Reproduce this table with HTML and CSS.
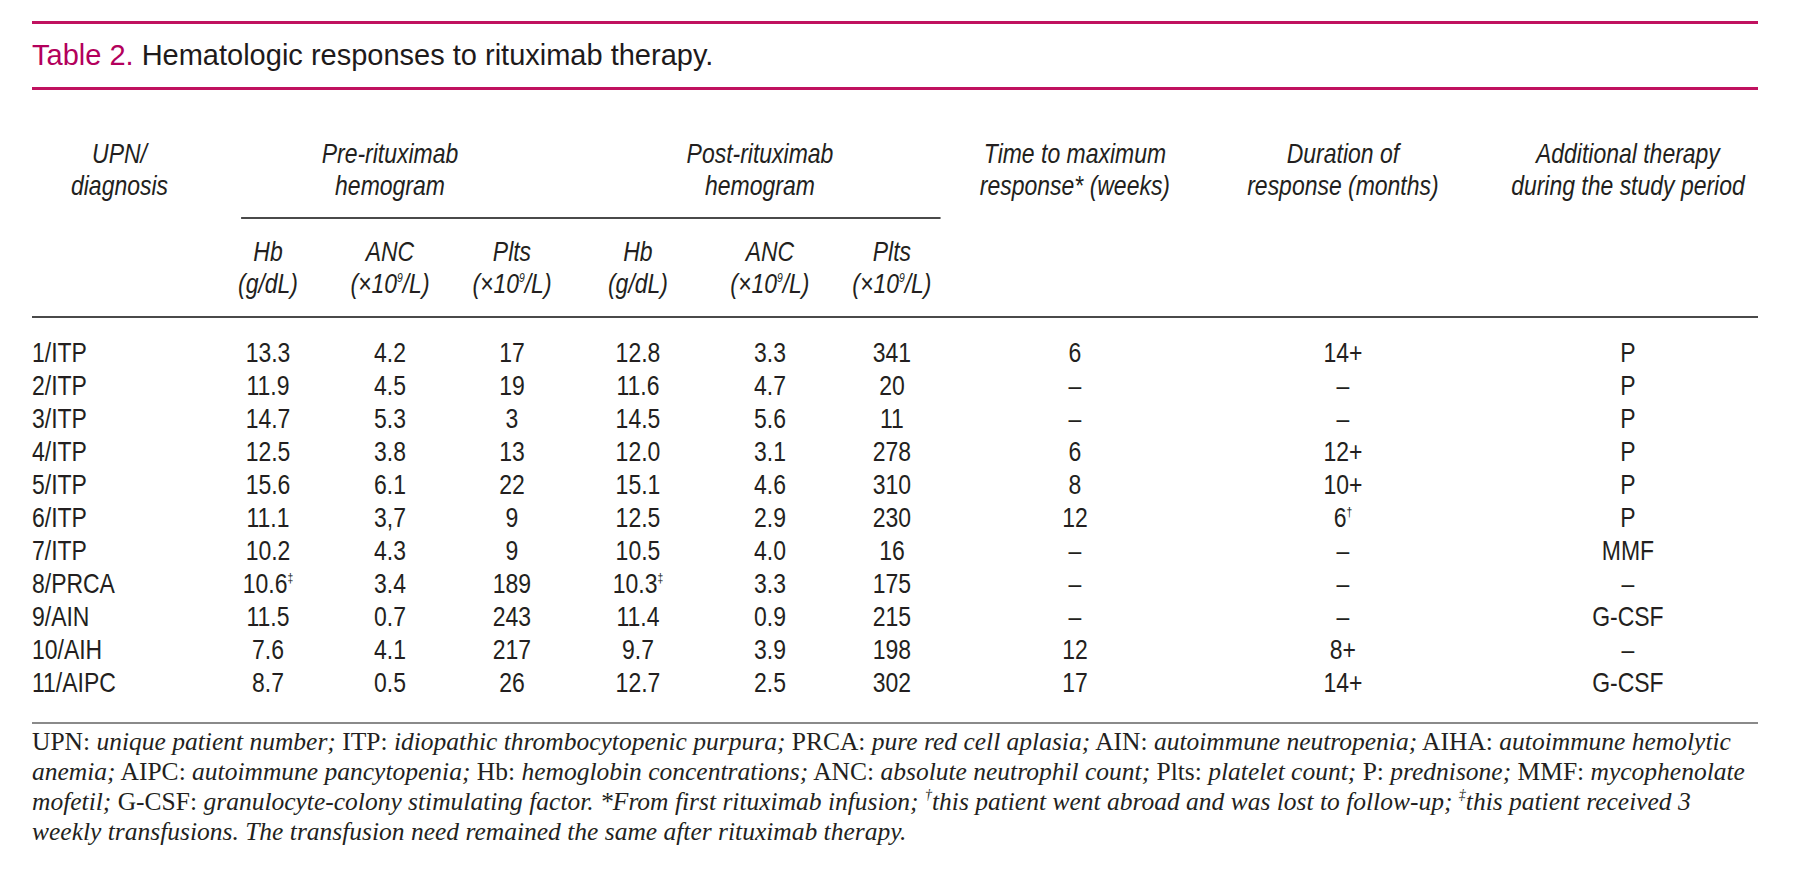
FILE: index.html
```html
<!DOCTYPE html>
<html lang="en">
<head>
<meta charset="utf-8">
<title>Table 2. Hematologic responses to rituximab therapy.</title>
<link rel="stylesheet" href="styles.css">
</head>
<body>
<div class="page">
  <div class="caption">
    <span class="caption-label">Table 2.</span> Hematologic responses to rituximab therapy.
  </div>

  <div class="table">
    <div class="thead">
      <div class="h h-upn">UPN/<br>diagnosis</div>
      <div class="h h-pre">Pre-rituximab<br>hemogram</div>
      <div class="h h-post">Post-rituximab<br>hemogram</div>
      <div class="h h-time">Time to maximum<br>response* (weeks)</div>
      <div class="h h-dur">Duration of<br>response (months)</div>
      <div class="h h-add">Additional therapy<br>during the study period</div>
      <div class="h-rule"></div>
      <div class="h sub s2">Hb<br>(g/dL)</div>
      <div class="h sub s3">ANC<br>(×10<sup>9</sup>/L)</div>
      <div class="h sub s4">Plts<br>(×10<sup>9</sup>/L)</div>
      <div class="h sub s5">Hb<br>(g/dL)</div>
      <div class="h sub s6">ANC<br>(×10<sup>9</sup>/L)</div>
      <div class="h sub s7">Plts<br>(×10<sup>9</sup>/L)</div>
    </div>

    <div class="tbody">
      <div class="c first">1/ITP</div><div class="c">13.3</div><div class="c">4.2</div><div class="c">17</div><div class="c">12.8</div><div class="c">3.3</div><div class="c">341</div><div class="c">6</div><div class="c">14+</div><div class="c last">P</div>
      <div class="c first">2/ITP</div><div class="c">11.9</div><div class="c">4.5</div><div class="c">19</div><div class="c">11.6</div><div class="c">4.7</div><div class="c">20</div><div class="c">–</div><div class="c">–</div><div class="c last">P</div>
      <div class="c first">3/ITP</div><div class="c">14.7</div><div class="c">5.3</div><div class="c">3</div><div class="c">14.5</div><div class="c">5.6</div><div class="c">11</div><div class="c">–</div><div class="c">–</div><div class="c last">P</div>
      <div class="c first">4/ITP</div><div class="c">12.5</div><div class="c">3.8</div><div class="c">13</div><div class="c">12.0</div><div class="c">3.1</div><div class="c">278</div><div class="c">6</div><div class="c">12+</div><div class="c last">P</div>
      <div class="c first">5/ITP</div><div class="c">15.6</div><div class="c">6.1</div><div class="c">22</div><div class="c">15.1</div><div class="c">4.6</div><div class="c">310</div><div class="c">8</div><div class="c">10+</div><div class="c last">P</div>
      <div class="c first">6/ITP</div><div class="c">11.1</div><div class="c">3,7</div><div class="c">9</div><div class="c">12.5</div><div class="c">2.9</div><div class="c">230</div><div class="c">12</div><div class="c">6<sup>†</sup></div><div class="c last">P</div>
      <div class="c first">7/ITP</div><div class="c">10.2</div><div class="c">4.3</div><div class="c">9</div><div class="c">10.5</div><div class="c">4.0</div><div class="c">16</div><div class="c">–</div><div class="c">–</div><div class="c last">MMF</div>
      <div class="c first">8/PRCA</div><div class="c">10.6<sup>‡</sup></div><div class="c">3.4</div><div class="c">189</div><div class="c">10.3<sup>‡</sup></div><div class="c">3.3</div><div class="c">175</div><div class="c">–</div><div class="c">–</div><div class="c last">–</div>
      <div class="c first">9/AIN</div><div class="c">11.5</div><div class="c">0.7</div><div class="c">243</div><div class="c">11.4</div><div class="c">0.9</div><div class="c">215</div><div class="c">–</div><div class="c">–</div><div class="c last">G-CSF</div>
      <div class="c first">10/AIH</div><div class="c">7.6</div><div class="c">4.1</div><div class="c">217</div><div class="c">9.7</div><div class="c">3.9</div><div class="c">198</div><div class="c">12</div><div class="c">8+</div><div class="c last">–</div>
      <div class="c first">11/AIPC</div><div class="c">8.7</div><div class="c">0.5</div><div class="c">26</div><div class="c">12.7</div><div class="c">2.5</div><div class="c">302</div><div class="c">17</div><div class="c">14+</div><div class="c last">G-CSF</div>
    </div>
  </div>

  <div class="note">
    UPN: <i>unique patient number;</i> ITP: <i>idiopathic thrombocytopenic purpura;</i> PRCA: <i>pure red cell aplasia;</i> AIN: <i>autoimmune neutropenia;</i> AIHA: <i>autoimmune hemolytic</i><br>
    <i>anemia;</i> AIPC: <i>autoimmune pancytopenia;</i> Hb: <i>hemoglobin concentrations;</i> ANC: <i>absolute neutrophil count;</i> Plts: <i>platelet count;</i> P: <i>prednisone;</i> MMF: <i>mycophenolate</i><br>
    <i>mofetil;</i> G-CSF: <i>granulocyte-colony stimulating factor. *From first rituximab infusion; <sup>†</sup>this patient went abroad and was lost to follow-up; <sup>‡</sup>this patient received 3</i><br>
    <i>weekly transfusions. The transfusion need remained the same after rituximab therapy.</i>
  </div>
</div>
</body>
</html>
```

FILE: styles.css
```css
html, body {
  margin: 0;
  padding: 0;
  background: #ffffff;
}

body {
  color: #231f20;
  font-family: "Liberation Sans", Arial, sans-serif;
}

.page {
  width: 1726px;
  padding: 21px 0 0 32px;
  overflow: hidden;
}

.caption {
  border-top: 3px solid #c0125f;
  border-bottom: 3px solid #c0125f;
  padding: 14px 0 15px;
  font-family: "Liberation Sans", Arial, sans-serif;
  font-size: 29px;
  line-height: 34px;
  color: #1e1a1b;
  white-space: nowrap;
}

.caption-label {
  color: #b3005c;
}

/* The table is set in a narrow face: the regular sans is condensed to 82%,
   and every width inside is given at 1/0.82 so the result spans 1726px. */
.table {
  width: 2104.88px;
  transform: scaleX(0.82);
  transform-origin: 0 0;
}

.thead,
.tbody {
  display: grid;
  grid-template-columns: 213.41px 148.78px 148.78px 148.78px 158.54px 163.41px 134.15px 312.2px 341.46px 335.37px;
  font-family: "Liberation Sans", Arial, sans-serif;
  font-size: 28px;
  color: #231f20;
}

.thead {
  padding: 48px 0 16px;
  border-bottom: 2px solid #4a4a4a;
}

.h {
  font-style: italic;
  text-align: center;
  line-height: 32px;
  white-space: nowrap;
}

.h-upn { grid-column: 1; grid-row: 1; }
.h-pre { grid-column: 2 / 5; grid-row: 1; }
.h-post { grid-column: 5 / 8; grid-row: 1; }
.h-time { grid-column: 8; grid-row: 1; }
.h-dur { grid-column: 9; grid-row: 1; }
.h-add { grid-column: 10; grid-row: 1; padding-left: 18.3px; }

.h-rule {
  grid-column: 2 / 8;
  grid-row: 2;
  height: 2px;
  margin: 15px 7.3px 0 41.5px;
  background: #4a4a4a;
}

.sub {
  grid-row: 3;
  margin-top: 17px;
}

.s2 { grid-column: 2; }
.s3 { grid-column: 3; }
.s4 { grid-column: 4; }
.s5 { grid-column: 5; }
.s6 { grid-column: 6; }
.s7 { grid-column: 7; }

sup {
  font-size: 0.45em;
  line-height: 0;
  vertical-align: 0.9em;
}

.tbody {
  padding: 18px 0 23px;
  border-bottom: 2px solid #8a8a8a;
}

.c {
  text-align: center;
  line-height: 33px;
  white-space: nowrap;
}

.c.first {
  text-align: left;
}

.c.last {
  padding-left: 18.3px;
}

.note {
  padding-top: 3px;
  font-family: "Liberation Serif", "Times New Roman", serif;
  font-size: 25.5px;
  line-height: 30px;
  color: #231f20;
  white-space: nowrap;
}

.note sup {
  font-size: 0.55em;
  vertical-align: 0.75em;
}
```
